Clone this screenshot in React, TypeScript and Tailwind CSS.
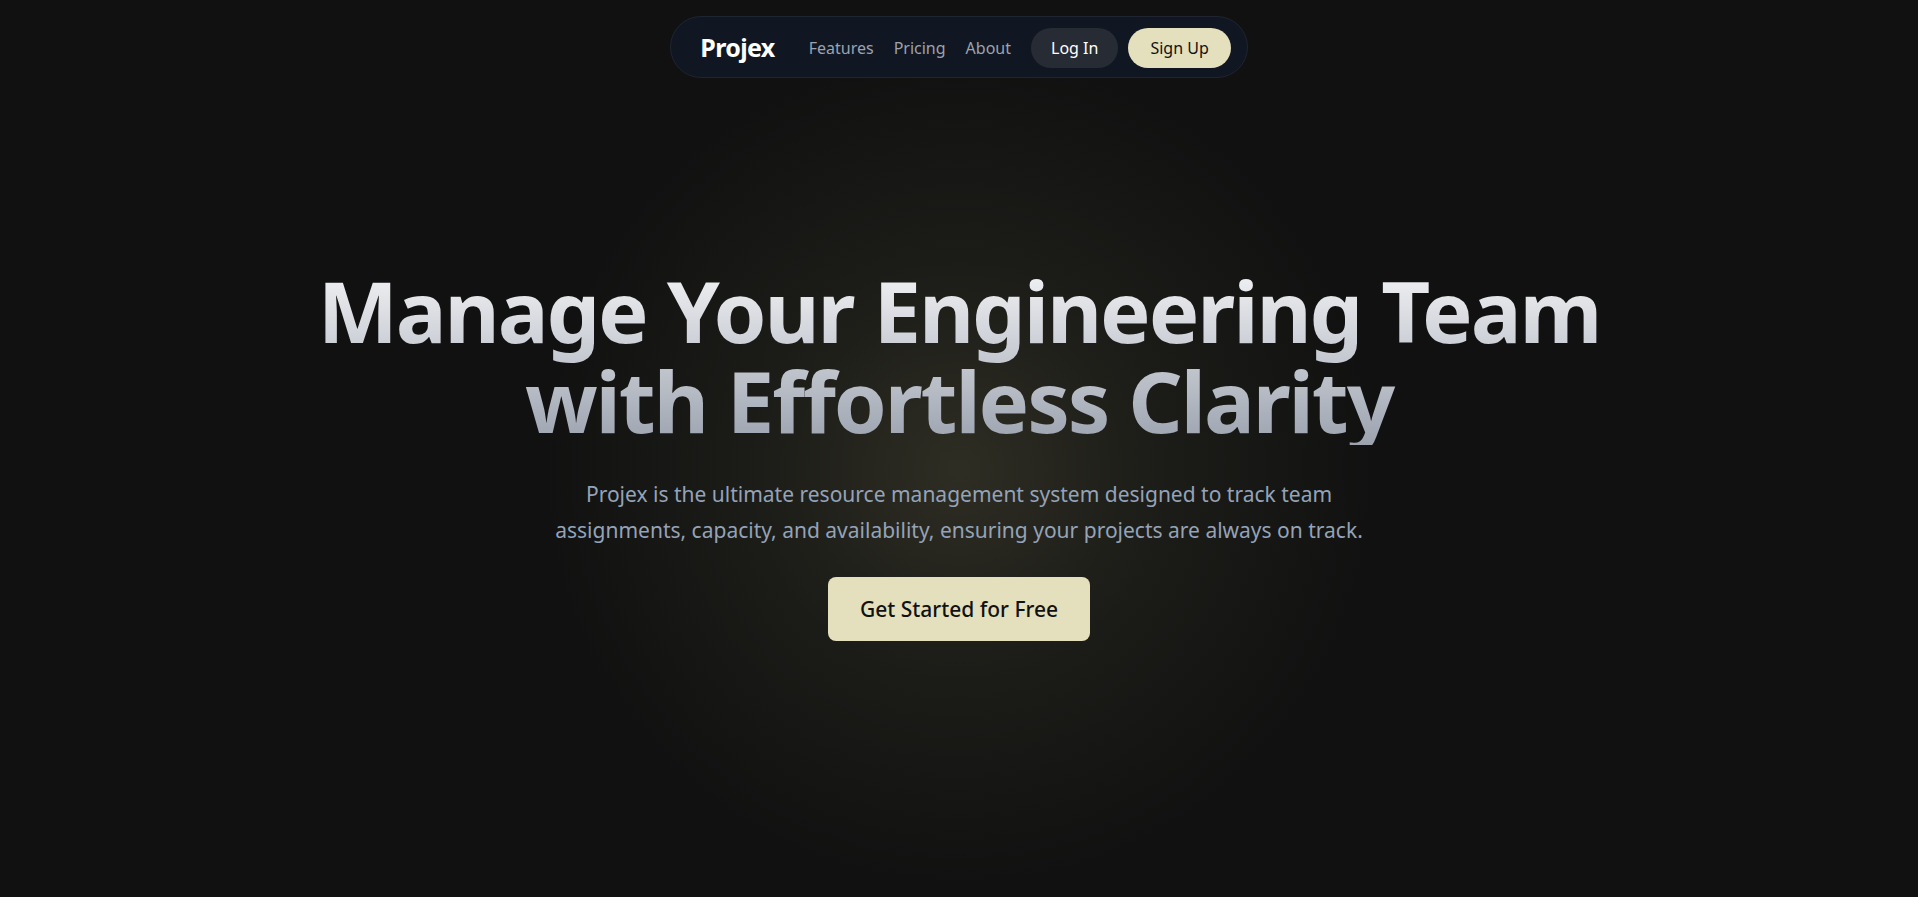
export default function App() {
  return (
    <div className="relative min-h-screen w-full overflow-hidden bg-[#111111] font-['Noto_Sans',sans-serif] text-white">
      {/* glow */}
      <div className="pointer-events-none absolute left-1/2 top-[470px] h-[840px] w-[840px] -translate-x-1/2 -translate-y-1/2 rounded-full bg-[radial-gradient(circle_at_center,rgba(56,55,42,0.75)_0%,rgba(40,40,32,0.45)_35%,rgba(17,17,17,0)_70%)]" />

      <div className="relative flex flex-col items-center">
        <nav className="mt-4 flex h-[62px] items-center rounded-full border border-[#1f2430] bg-[#111722] pl-[29px] pr-4 pt-0.5">
          <span className="mr-[34px] text-[25px] font-bold tracking-tight text-white">Projex</span>
          <div className="flex items-center gap-5 text-base text-[#9ca3af]">
            <a>Features</a>
            <a>Pricing</a>
            <a>About</a>
          </div>
          <button className="ml-5 h-10 rounded-full bg-[#272b33] px-5 text-base text-white">Log In</button>
          <button className="ml-2.5 h-10 rounded-full bg-[#e4dfbd] px-[22px] text-base text-[#111111]">Sign Up</button>
        </nav>

        <h1 className="mt-[187px] bg-gradient-to-b from-[#f4f4f6] to-[#9ca3af] bg-clip-text text-center text-[85px] font-bold leading-[90px] tracking-tight text-transparent">
          Manage Your Engineering Team
          <br />
          with Effortless Clarity
        </h1>

        <p className="mt-[31px] max-w-[880px] text-center text-[21px] leading-[36px] text-[#94a3b8]">
          Projex is the ultimate resource management system designed to track team assignments, capacity, and availability, ensuring your projects are always on track.
        </p>

        <button className="mt-[29px] rounded-lg bg-[#e4dfbd] px-8 py-[18px] text-[21px] font-medium leading-7 text-[#111111]">
          Get Started for Free
        </button>
      </div>
    </div>
  );
}
